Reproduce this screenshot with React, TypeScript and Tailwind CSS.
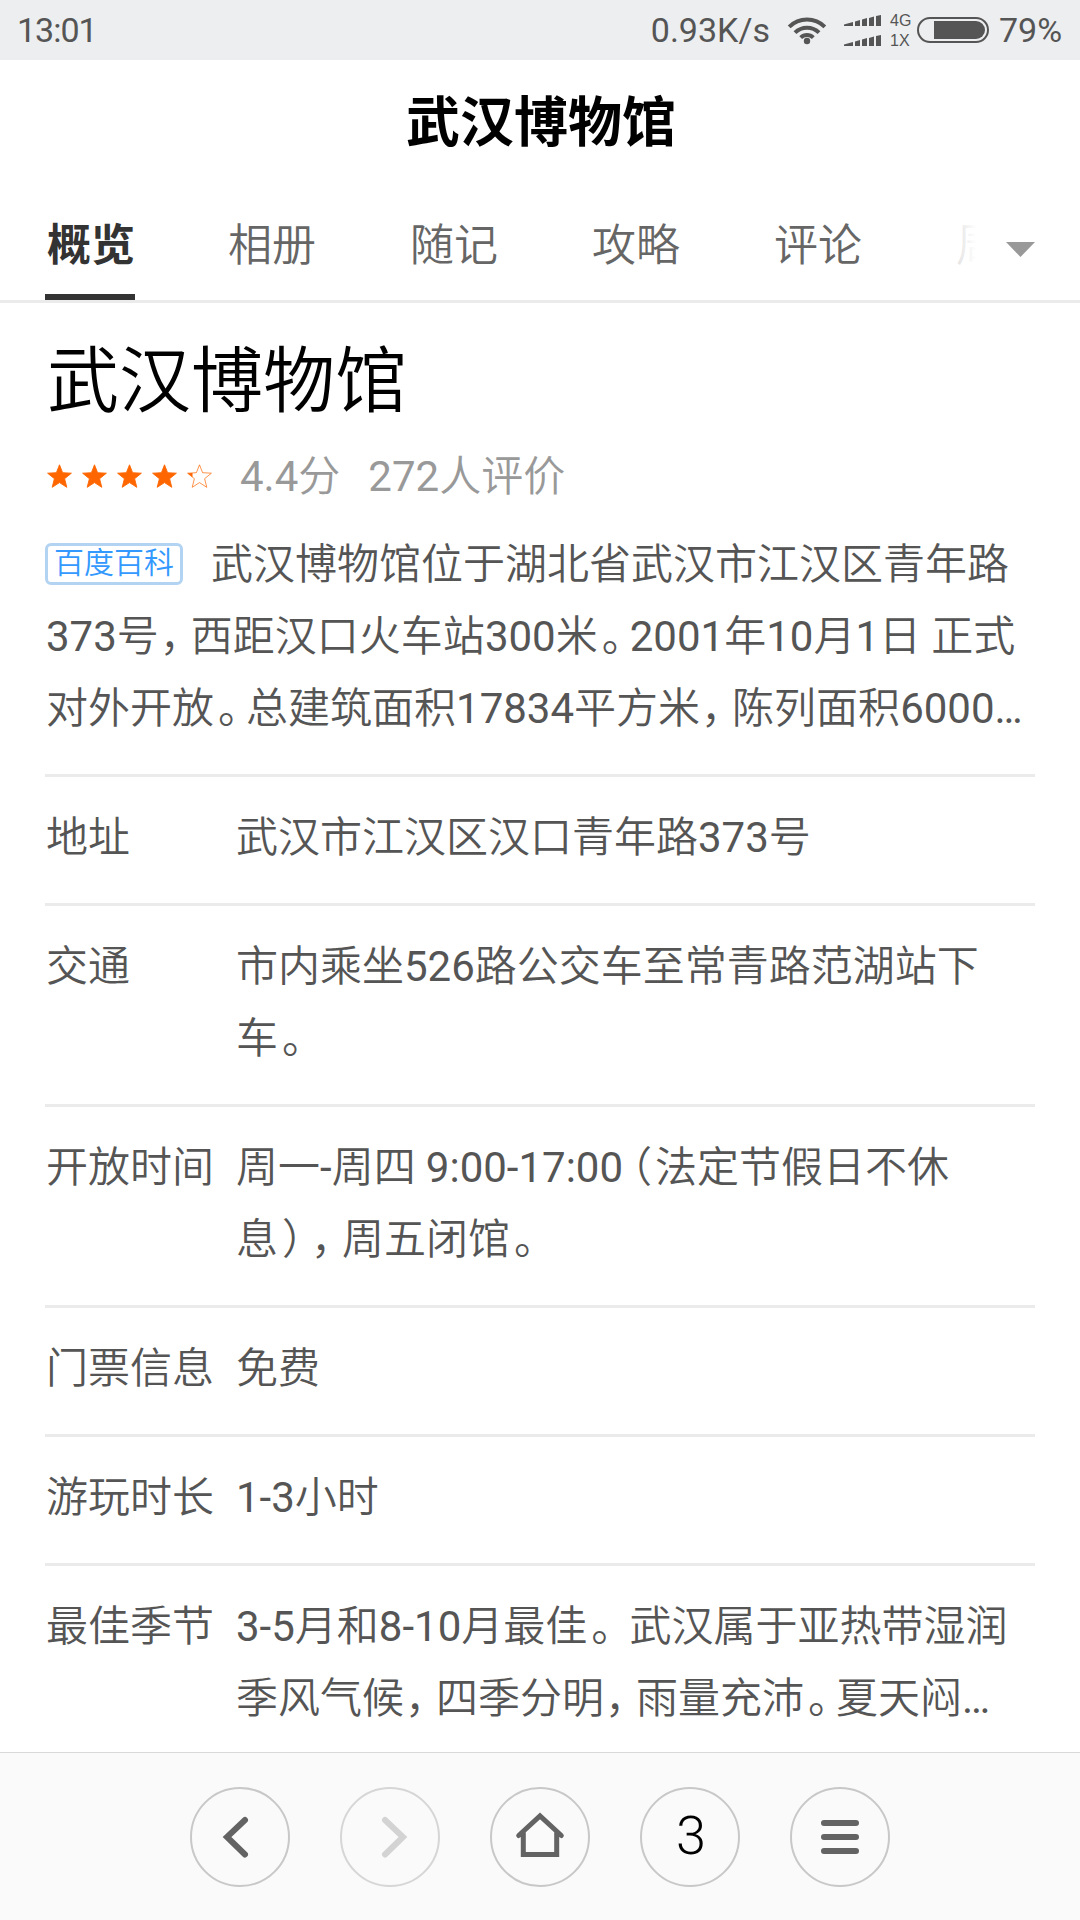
const TABS = ["概览", "相册", "随记", "攻略", "评论", "周边"];

const INTRO = [
  "373号，西距汉口火车站300米。2001年10月1日 正式",
  "对外开放。总建筑面积17834平方米，陈列面积6000…",
];

const INFO = [
  { label: "地址", lines: ["武汉市江汉区汉口青年路373号"] },
  { label: "交通", lines: ["市内乘坐526路公交车至常青路范湖站下", "车。"] },
  { label: "开放时间", lines: ["周一-周四 9:00-17:00（法定节假日不休", "息），周五闭馆。"] },
  { label: "门票信息", lines: ["免费"] },
  { label: "游玩时长", lines: ["1-3小时"] },
  {
    label: "最佳季节",
    lines: ["3-5月和8-10月最佳。 武汉属于亚热带湿润", "季风气候，四季分明，雨量充沛。夏天闷…"],
  },
];

// Half-width punctuation plus its own side bearings, about 3/4 em in all
const PUNCTUATION: Record<string, string> = {
  "，": "ml-px mr-[10px] [font-feature-settings:'halt']",
  "。": "ml-[4px] mr-[7px] [font-feature-settings:'halt']",
  "（": "ml-[8px] mr-[3px] [font-feature-settings:'halt']",
  "）": "ml-[4px] mr-[7px] [font-feature-settings:'halt']",
};

// Chinese is set a little lighter than the figures beside it
function Line({ text }: { text: string }) {
  return (
    <span className="block font-[350] whitespace-nowrap">
      {text.split(/([，。（）]|[\d.:…-]+)/).map((part, i) =>
        i % 2 === 1 ? (
          <span key={i} className={PUNCTUATION[part] ?? "font-normal"}>
            {part}
          </span>
        ) : (
          part
        )
      )}
    </span>
  );
}

function WifiIcon() {
  return (
    <svg width="40" height="30" viewBox="0 0 40 30" fill="none" stroke="#555" strokeWidth="4">
      <path d="M2.2 11.8a25.2 25.2 0 0 1 35.6 0" />
      <path d="M8 17.6a17 17 0 0 1 24 0" />
      <path d="M13.7 22.6a9 9 0 0 1 12.6 0" />
      <circle cx="20" cy="26" r="3.2" fill="#555" stroke="none" />
    </svg>
  );
}

function SignalBars() {
  return (
    <svg width="38" height="11" viewBox="0 0 38 11" fill="#555">
      <path d="M0 9.5 9 7v4H0z" />
      <path d="M11 6.5 16 5v6h-5z" />
      <path d="M18 4.5 23 3v8h-5z" />
      <path d="M25 3 30 1.5V11h-5z" />
      <path d="M32 1 37 0v11h-5z" />
    </svg>
  );
}

function BatteryIcon() {
  return (
    <svg width="72" height="26" viewBox="0 0 72 26">
      <rect x="1" y="1" width="70" height="24" rx="12" fill="none" stroke="#555" strokeWidth="2" />
      <path d="M17 4h42a9 9 0 0 1 0 18H17z" fill="#555" />
    </svg>
  );
}

function StatusBar() {
  return (
    <header className="flex h-[60px] items-center bg-[#edeef0] pl-[17px] text-[34px] leading-[60px] text-[#555]">
      <span className="tracking-[-1px]">13:01</span>
      <div className="ml-auto flex items-center">
        <span>0.93K/s</span>
        <div className="ml-[17px]">
          <WifiIcon />
        </div>
        <div className="ml-[17px] flex flex-col gap-[9px]">
          <SignalBars />
          <SignalBars />
        </div>
        <div className="ml-[8px] flex w-[27px] flex-col pt-px font-['Liberation_Sans',sans-serif] text-[16px] leading-5">
          <span>4G</span>
          <span>1X</span>
        </div>
        <BatteryIcon />
        <span className="ml-[10px] w-[81px]">79%</span>
      </div>
    </header>
  );
}

function Star({ filled }: { filled: boolean }) {
  return (
    <svg width="25" height="24" viewBox="0 0 25 24">
      <path
        d="M12.5.8 15.6 8.7 24.4 9.2 17.6 14.7 19.8 23.3 12.5 18.6 5.2 23.3 7.4 14.7.6 9.2 9.4 8.7z"
        fill={filled ? "#ff6600" : "#fff"}
        stroke="#ff6600"
        strokeWidth={filled ? 0.9 : 0.7}
      />
      {!filled && <path d="M.6 9.2 5.5 9v4.3z" fill="#ff6600" />}
    </svg>
  );
}

function NavButton({ children, disabled }: { children: React.ReactNode; disabled?: boolean }) {
  return (
    <button
      className={`flex size-[100px] items-center justify-center rounded-full border-2 ${
        disabled ? "border-[#d6d6d6] text-[#d3d3d3]" : "border-[#c8c8c8] text-[#636363]"
      }`}
    >
      {children}
    </button>
  );
}

function NavIcon({ d, width = 6 }: { d: string; width?: number }) {
  return (
    <svg className="size-[100px] shrink-0" viewBox="0 0 100 100" fill="none" stroke="currentColor" strokeWidth={width} strokeLinecap="round">
      <path d={d} />
    </svg>
  );
}

export default function App() {
  return (
    <div className="flex h-[1920px] w-[1080px] flex-col overflow-hidden bg-white font-[Roboto,'Noto_Sans_CJK_SC',sans-serif] text-[#555]">
      <StatusBar />

      <h1 className="h-[124px] pl-[2px] text-center text-[54px] leading-[127px] font-bold text-black">武汉博物馆</h1>

      {/* Tabs */}
      <nav className="relative flex h-[119px] items-stretch gap-[92px] border-b-[3px] border-[#ebebeb] pl-[45px] text-[44px] leading-[125px] text-[#666]">
        {TABS.map((tab, i) => (
          <span
            key={tab}
            className={`w-[90px] shrink-0 whitespace-nowrap ${
              i === 0 ? "border-b-[6px] border-[#333] pl-[2px] font-bold text-[#333]" : "pl-px font-[350]"
            }`}
          >
            {tab}
          </span>
        ))}
        <div className="absolute top-0 right-0 flex h-[116px] w-[130px] items-center justify-end bg-linear-to-r from-white/75 from-0% via-white via-20% to-white pt-[15px] pr-[45px]">
          <svg width="29" height="15" viewBox="0 0 29 15" fill="#999">
            <path d="M0 0h29L14.5 15z" />
          </svg>
        </div>
      </nav>

      <main className="flex-1 overflow-hidden px-[45px] text-[42px] leading-[72px]">
        <h2 className="mt-[26px] h-[104px] pl-[2px] text-[72px] leading-[106px] font-[350] text-black">武汉博物馆</h2>

        <div className="mt-[8px] flex h-[72px] items-center text-[#999]">
          <div className="flex gap-[10px] pb-[2px] pl-[2px]">
            {[0, 1, 2, 3, 4].map((n) => (
              <Star key={n} filled={n < 4} />
            ))}
          </div>
          <div className="ml-[28px] flex gap-[28px]">
            <Line text="4.4分" />
            <Line text="272人评价" />
          </div>
        </div>

        <section className="mt-[16px] border-b-[3px] border-[#ebebeb] pb-[29px]">
          <div className="flex h-[72px] items-center">
            <span className="mb-[3px] h-[42px] w-[138px] rounded-[6px] border-[3px] border-[#b3d3f2] text-center text-[30px] leading-[34px] font-[350] text-[#3399ff]">
              百度百科
            </span>
            <div className="ml-[28px]">
              <Line text="武汉博物馆位于湖北省武汉市江汉区青年路" />
            </div>
          </div>
          <div className="pl-px">
            {INTRO.map((line) => (
              <Line key={line} text={line} />
            ))}
          </div>
        </section>

        <dl>
          {INFO.map((row) => (
            <div key={row.label} className="flex border-b-[3px] border-[#ebebeb] pt-[25px] pb-[29px] pl-px">
              <dt className="w-[190px] shrink-0 font-[350]">{row.label}</dt>
              <dd>
                {row.lines.map((line) => (
                  <Line key={line} text={line} />
                ))}
              </dd>
            </div>
          ))}
        </dl>
      </main>

      {/* Browser toolbar */}
      <footer className="flex h-[168px] items-center justify-center gap-[50px] border-t border-[#d9d9d9] bg-[#fafafa]">
        <NavButton>
          <NavIcon d="M55 33 37 50l18 17.5" />
        </NavButton>
        <NavButton disabled>
          <NavIcon d="M45 33 63 50 45 67.5" />
        </NavButton>
        <NavButton>
          <NavIcon width={5} d="M28.7 48.5 50 29l21.3 19.5M33.3 46v21.5h33.4V46" />
        </NavButton>
        <NavButton>
          <span className="pb-[2px] pl-[2px] text-[54px] leading-none font-light text-black">3</span>
        </NavButton>
        <NavButton>
          <NavIcon d="M34 36h32M34 50h32M34 64h32" />
        </NavButton>
      </footer>
    </div>
  );
}
